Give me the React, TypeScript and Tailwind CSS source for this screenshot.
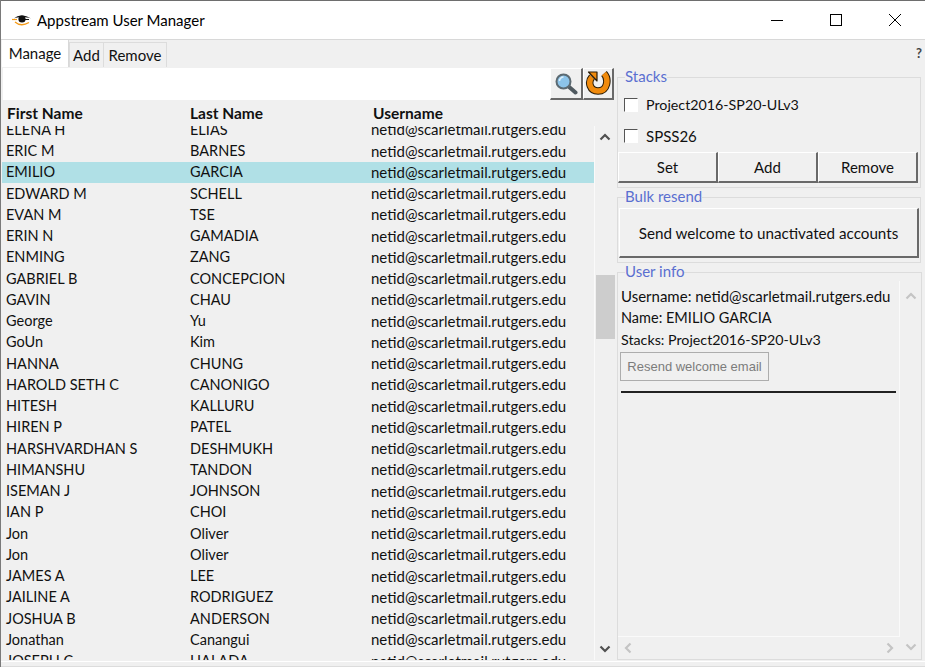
const users = [
  ["ELENA H", "ELIAS"],
  ["ERIC M", "BARNES"],
  ["EMILIO", "GARCIA"],
  ["EDWARD M", "SCHELL"],
  ["EVAN M", "TSE"],
  ["ERIN N", "GAMADIA"],
  ["ENMING", "ZANG"],
  ["GABRIEL B", "CONCEPCION"],
  ["GAVIN", "CHAU"],
  ["George", "Yu"],
  ["GoUn", "Kim"],
  ["HANNA", "CHUNG"],
  ["HAROLD SETH C", "CANONIGO"],
  ["HITESH", "KALLURU"],
  ["HIREN P", "PATEL"],
  ["HARSHVARDHAN S", "DESHMUKH"],
  ["HIMANSHU", "TANDON"],
  ["ISEMAN J", "JOHNSON"],
  ["IAN P", "CHOI"],
  ["Jon", "Oliver"],
  ["Jon", "Oliver"],
  ["JAMES A", "LEE"],
  ["JAILINE A", "RODRIGUEZ"],
  ["JOSHUA B", "ANDERSON"],
  ["Jonathan", "Canangui"],
  ["JOSEPH C", "HALADA"],
]

const bevel = "border border-t-white border-l-white border-r-[#696969] border-b-[#696969] border-b-2 border-r-2 bg-[#f0f0f0]"

function Chevron({ up, light }: { up?: boolean; light?: boolean }) {
  return (
    <svg width="12" height="8" viewBox="0 0 12 8" fill="none" stroke={light ? "#c4c4c4" : "#505050"} strokeWidth="2.2">
      <path d={up ? "M1.5 6.5 6 2l4.5 4.5" : "M1.5 1.5 6 6l4.5-4.5"} />
    </svg>
  )
}

function Side({ left, light }: { left?: boolean; light?: boolean }) {
  return (
    <svg width="8" height="12" viewBox="0 0 8 12" fill="none" stroke={light ? "#c4c4c4" : "#505050"} strokeWidth="2.2">
      <path d={left ? "M6.5 1.5 2 6l4.5 4.500" : "M1.500 1.500 6 6l-4.500 4.500"} />
    </svg>
  )
}

function Group({ title, className, children }: { title: string; className?: string; children: React.ReactNode }) {
  return (
    <fieldset className={`border border-[#dcdcdc] ${className ?? ""}`}>
      <legend className="ml-[7px] h-[18px] text-[15px] leading-[16px] text-[#5a6fd0]">{title}</legend>
      {children}
    </fieldset>
  )
}

export default function App() {
  return (
    <div className="flex h-[667px] w-[925px] flex-col overflow-hidden border-l border-l-[#7a7a7a] bg-[#f0f0f0] text-[15px] text-[#111] [font-family:'Lato','Open_Sans',sans-serif]">
      <div className="flex h-[40px] items-center border-t border-t-[#6e6e6e] border-b border-b-[#d8d8d8] bg-white pl-[11px]">
        <svg width="19" height="12" viewBox="0 0 19 12" className="mr-[6px]">
          <path d="M0 5.500h5" stroke="#f59a16" strokeWidth="1.200" />
          <path d="M2 4.500C6 .5 13 .5 19 4.500 14 2.500 6 2.500 2 4.500Z" fill="#111" />
          <circle cx="10" cy="5" r="3.600" fill="#111" />
          <path d="M13 5.500h4" stroke="#111" strokeWidth="1" />
          <path d="M3 8c4 3.500 9 3.500 14 .5" stroke="#f59a16" strokeWidth="1.300" fill="none" />
        </svg>
        <span className="text-[15px] text-black">Appstream User Manager</span>
        <div className="ml-auto flex h-full items-center pr-px">
          <div className="flex h-full w-[59px] items-center justify-center">
            <div className="h-px w-[12px] bg-black" />
          </div>
          <div className="flex h-full w-[59px] items-center justify-center">
            <div className="h-[12px] w-[12px] border border-black" />
          </div>
          <div className="flex h-full w-[59px] items-center justify-center">
            <svg width="12" height="12" viewBox="0 0 12 12" stroke="#000" strokeWidth="1">
              <path d="M0 0 12 12M12 0 0 12" />
            </svg>
          </div>
        </div>
      </div>

      <div className="flex h-[27px] items-end pl-px">
        <div className="flex h-[27px] w-[67px] items-center justify-center border-r border-[#d8d8d8] bg-white">Manage</div>
        <div className="flex h-[25px] w-[35px] items-center justify-center border-x border-t border-[#dcdcdc]">Add</div>
        <div className="flex h-[25px] w-[63px] items-center justify-center border-r border-t border-[#dcdcdc]">Remove</div>
        <span className="mb-[7px] ml-auto mr-[3px] text-[13px] font-bold leading-none text-[#444]">?</span>
      </div>

      <div className="flex h-[593px]">
        <div className="flex w-[614px] flex-col pl-[2px]">
          <div className="flex h-[33px] pt-px">
            <div className="w-[547px] bg-white" />
            <button className={`flex h-[32px] w-[33px] items-center justify-center ${bevel}`}>
              <svg width="24" height="24" viewBox="0 0 24 24">
                <path d="M14 14 21.500 20.500" stroke="#505a60" strokeWidth="4" strokeLinecap="round" />
                <circle cx="9.500" cy="9.500" r="7" fill="#8cc4ea" stroke="#5c6a72" strokeWidth="2" />
                <path d="M5.500 9a4 4 0 0 1 4-4" stroke="#dff0fb" strokeWidth="1.500" fill="none" />
              </svg>
            </button>
            <button className={`flex h-[32px] w-[31px] items-center justify-center ${bevel}`}>
              <svg width="26" height="27" viewBox="0 0 26 27">
                <path d="M19 3.500C24 9 22.500 21 13 21 5 21 2.500 12 7 7" fill="none" stroke="#2a1c08" strokeWidth="7.500" />
                <path d="M19 3.500C24 9 22.500 21 13 21 5 21 2.500 12 7 7" fill="none" stroke="#f08a0c" strokeWidth="5.500" />
                <path d="M3.500 2h8.500V11Z" fill="#f08a0c" stroke="#2a1c08" strokeWidth="1.200" strokeLinejoin="round" />
              </svg>
            </button>
          </div>
          <div className="flex h-[26px] items-start pl-[4px] pt-[2px] text-[15.5px] font-bold">
            <span className="w-[183px]">First Name</span>
            <span className="w-[183px]">Last Name</span>
            <span>Username</span>
          </div>
          <div className="flex min-h-0 flex-1">
            <div className="-ml-px min-h-0 flex-1 overflow-hidden">
              <div className="-mt-[7px]">
                {users.map(([first, last], i) => (
                  <div key={i} className={`flex h-[21.26px] items-center pl-[4px] ${first === "EMILIO" ? "bg-[#b0e0e6]" : ""}`}>
                    <span className="w-[184px] text-[14.5px]">{first}</span>
                    <span className="w-[181px] text-[14.5px]">{last}</span>
                    <span>netid@scarletmail.rutgers.edu</span>
                  </div>
                ))}
              </div>
            </div>
            <div className="flex w-[21px] flex-col items-center border-l border-[#fafafa] pb-[7px] pt-[7px]">
              <Chevron up />
              <div className="mt-[134px] h-[64px] w-[19px] self-center bg-[#cdcdcd]" />
              <div className="mt-auto"><Chevron /></div>
            </div>
          </div>
        </div>

        <div className="flex w-[310px] flex-col pl-[2px] pr-[4px] pt-[1px]">
          <Group title="Stacks" className="h-[120px] shrink-0">
            <div className="flex h-[34px] items-center pl-[6px] pt-[4px] text-[14.25px]">
              <div className="mr-[8px] h-[14px] w-[14px] border border-[#555] border-r-white border-b-white bg-white" />
              Project2016-SP20-ULv3
            </div>
            <div className="flex h-[32px] items-center pl-[6px]">
              <div className="mr-[8px] h-[14px] w-[14px] border border-[#555] border-r-white border-b-white bg-white" />
              SPSS26
            </div>
            <div className="flex">
              <button className={`h-[31px] w-[100px] ${bevel}`}>Set</button>
              <button className={`h-[31px] w-[100px] ${bevel}`}>Add</button>
              <button className={`h-[31px] w-[100px] ${bevel}`}>Remove</button>
            </div>
          </Group>
          <Group title="Bulk resend" className="h-[75px] shrink-0">
            <button className={`ml-px mt-[2px] h-[50px] w-[300px] pt-px text-[15.2px] ${bevel}`}>Send welcome to unactivated accounts</button>
          </Group>
          <Group title="User info" className="min-h-0 flex-1">
            <div className="flex h-full">
              <div className="flex w-[282px] flex-col">
                <div className="flex-1 border-r border-[#fafafa] pl-[3px]">
                  <div className="whitespace-nowrap pt-[5px] leading-[21.300px]">
                    <div>Username: netid@scarletmail.rutgers.edu</div>
                    <div className="text-[14.5px]">Name: EMILIO GARCIA</div>
                    <div className="text-[14.25px]">Stacks: Project2016-SP20-ULv3</div>
                  </div>
                  <button className="-ml-px mt-[2px] h-[29px] w-[149px] border border-[#adadad] text-[13px] text-[#7c7c7c] [font-family:'Liberation_Sans',sans-serif]">
                    Resend welcome email
                  </button>
                  <div className="mt-[10px] h-[2px] w-[275px] bg-[#222]" />
                </div>
                <div className="flex h-[23px] items-center justify-between border-t border-[#fafafa] px-[6px]">
                  <Side left light />
                  <Side light />
                </div>
              </div>
              <div className="flex w-[21px] flex-col items-center pb-[8px] pt-[11px]">
                <Chevron up light />
                <div className="mt-auto"><Chevron light /></div>
              </div>
            </div>
          </Group>
        </div>
      </div>
      <div className="mt-px h-[6px] border-t border-t-white border-b border-b-[#dcdcdc]" />
    </div>
  )
}
